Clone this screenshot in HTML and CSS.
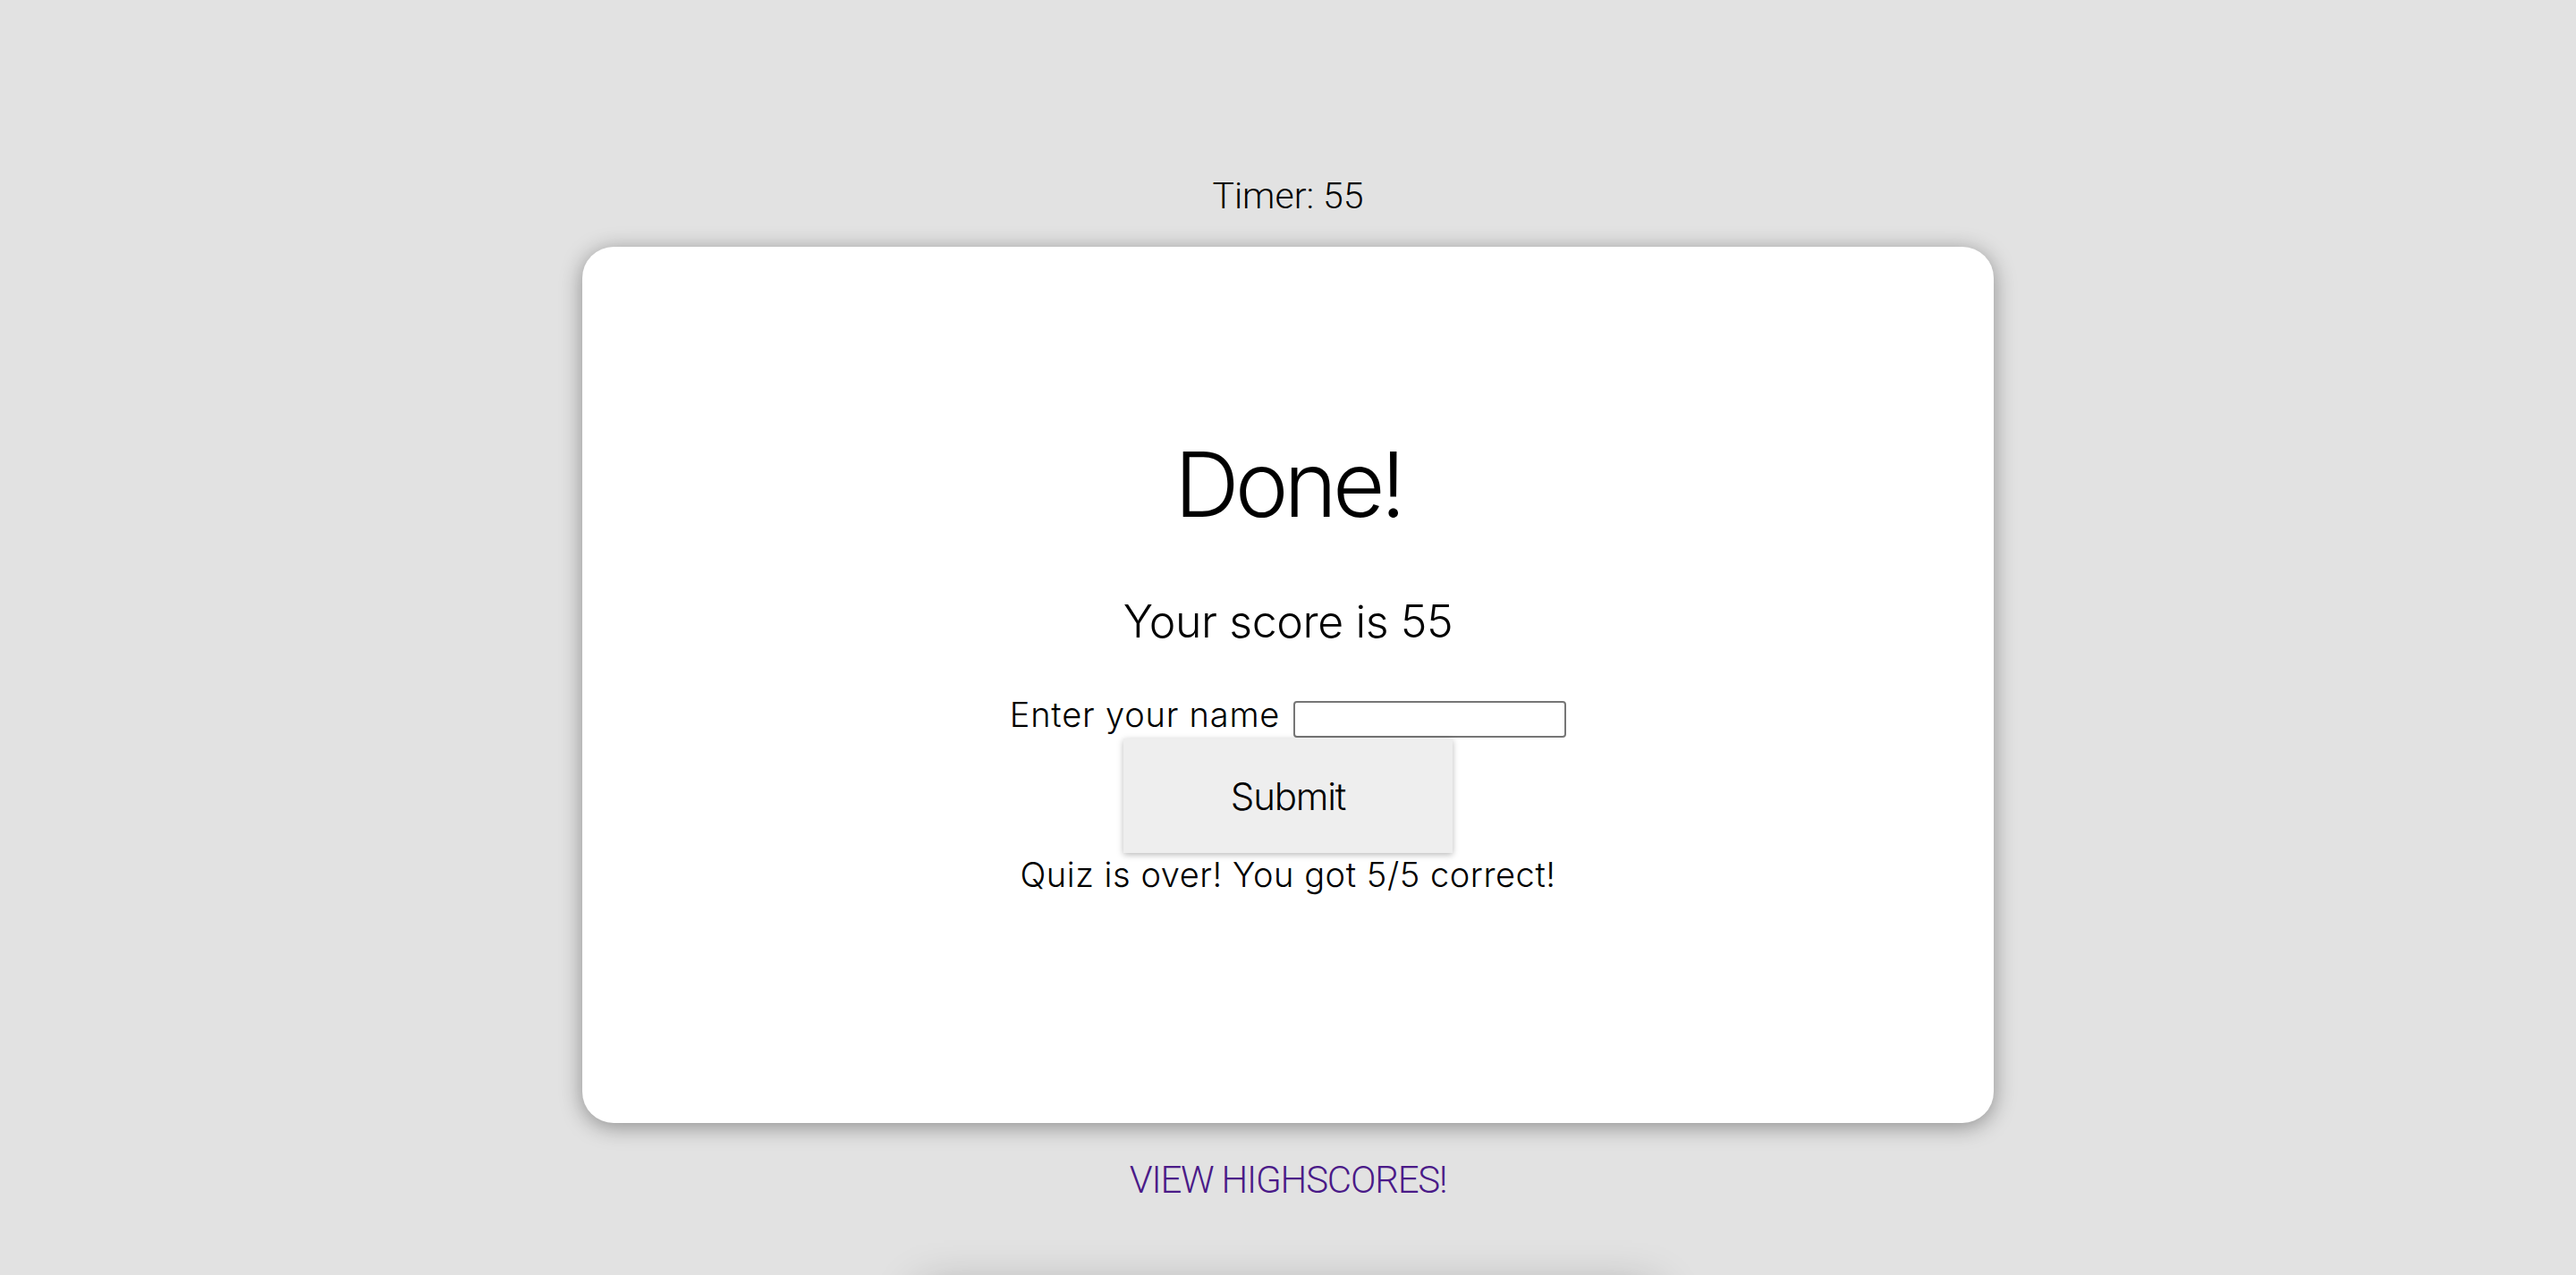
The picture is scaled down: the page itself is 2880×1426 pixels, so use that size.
FILE: index.html
```html
<!DOCTYPE html>
<html lang="en">
<head>
<meta charset="utf-8">
<title>Quiz</title>
<link rel="stylesheet" href="styles.css">
</head>
<body>
<main class="page">
  <div class="timer">Timer: 55</div>
  <section class="card">
    <h1 class="done">Done!</h1>
    <p class="score">Your score is 55</p>
    <form class="name-form" onsubmit="return false">
      <div class="name-row">
        <label class="name-label" for="name">Enter your name</label>
        <input class="name-input" id="name" type="text">
      </div>
      <button class="submit" type="submit">Submit</button>
    </form>
    <p class="result">Quiz is over! You got 5/5 correct!</p>
  </section>
  <a class="highscores" href="#">VIEW HIGHSCORES!</a>
  <div class="below"></div>
</main>
</body>
</html>
```

FILE: styles.css
```css
html {
  overflow: hidden;
}
body {
  margin: 0;
  background: #e2e2e2;
  font-family: "Inter", "Noto Sans", sans-serif;
  color: #000;
}
.page {
  display: flex;
  flex-direction: column;
  align-items: center;
  padding-top: 195px;
}
.timer {
  font-family: "Roboto", "Liberation Sans", sans-serif;
  font-size: 41px;
  line-height: 48px;
  font-weight: 300;
}
.card {
  box-sizing: border-box;
  margin-top: 33px;
  width: 1578px;
  height: 980px;
  padding-top: 205px;
  background: #fff;
  border-radius: 35px;
  box-shadow: 0 4px 24px rgba(0, 0, 0, 0.38);
  display: flex;
  flex-direction: column;
  align-items: center;
}
.done {
  margin: 0;
  font-size: 101px;
  line-height: 120px;
  font-weight: 300;
  letter-spacing: -5px;
}
.score {
  margin: 64px 0 0;
  font-size: 50px;
  line-height: 60px;
  font-weight: 300;
  letter-spacing: -0.4px;
}
.name-form {
  margin-top: 51px;
  display: flex;
  flex-direction: column;
  align-items: center;
}
.name-row {
  display: flex;
  align-items: flex-start;
  gap: 15px;
}
.name-label {
  font-size: 38px;
  line-height: 46px;
  font-weight: 300;
  letter-spacing: 0.8px;
}
.name-input {
  box-sizing: border-box;
  margin: 8px 0 0;
  width: 305px;
  height: 41px;
  border: 2px solid #767676;
  border-radius: 4px;
  background: #fff;
  padding: 0 4px;
}
.submit {
  margin-top: 1px;
  width: 368px;
  height: 128px;
  border: none;
  background: #eeeeee;
  box-shadow: 0 2px 7px rgba(0, 0, 0, 0.28);
  font-family: "Inter", "Noto Sans", sans-serif;
  font-size: 42px;
  font-weight: 300;
  letter-spacing: -1.2px;
  color: #000;
  padding: 0;
}
.result {
  margin: 1px 0 0;
  font-size: 38px;
  line-height: 46px;
  font-weight: 300;
  letter-spacing: 0.55px;
}
.highscores {
  margin-top: 39px;
  font-family: "Roboto", "Liberation Sans", sans-serif;
  font-size: 42px;
  line-height: 50px;
  font-weight: 300;
  letter-spacing: -1.2px;
  color: #4a1a88;
  text-decoration: none;
}
.below {
  margin-top: 95px;
  width: 820px;
  height: 400px;
  background: #e2e2e2;
  box-shadow: 0 4px 50px rgba(0, 0, 0, 0.3);
}
```
